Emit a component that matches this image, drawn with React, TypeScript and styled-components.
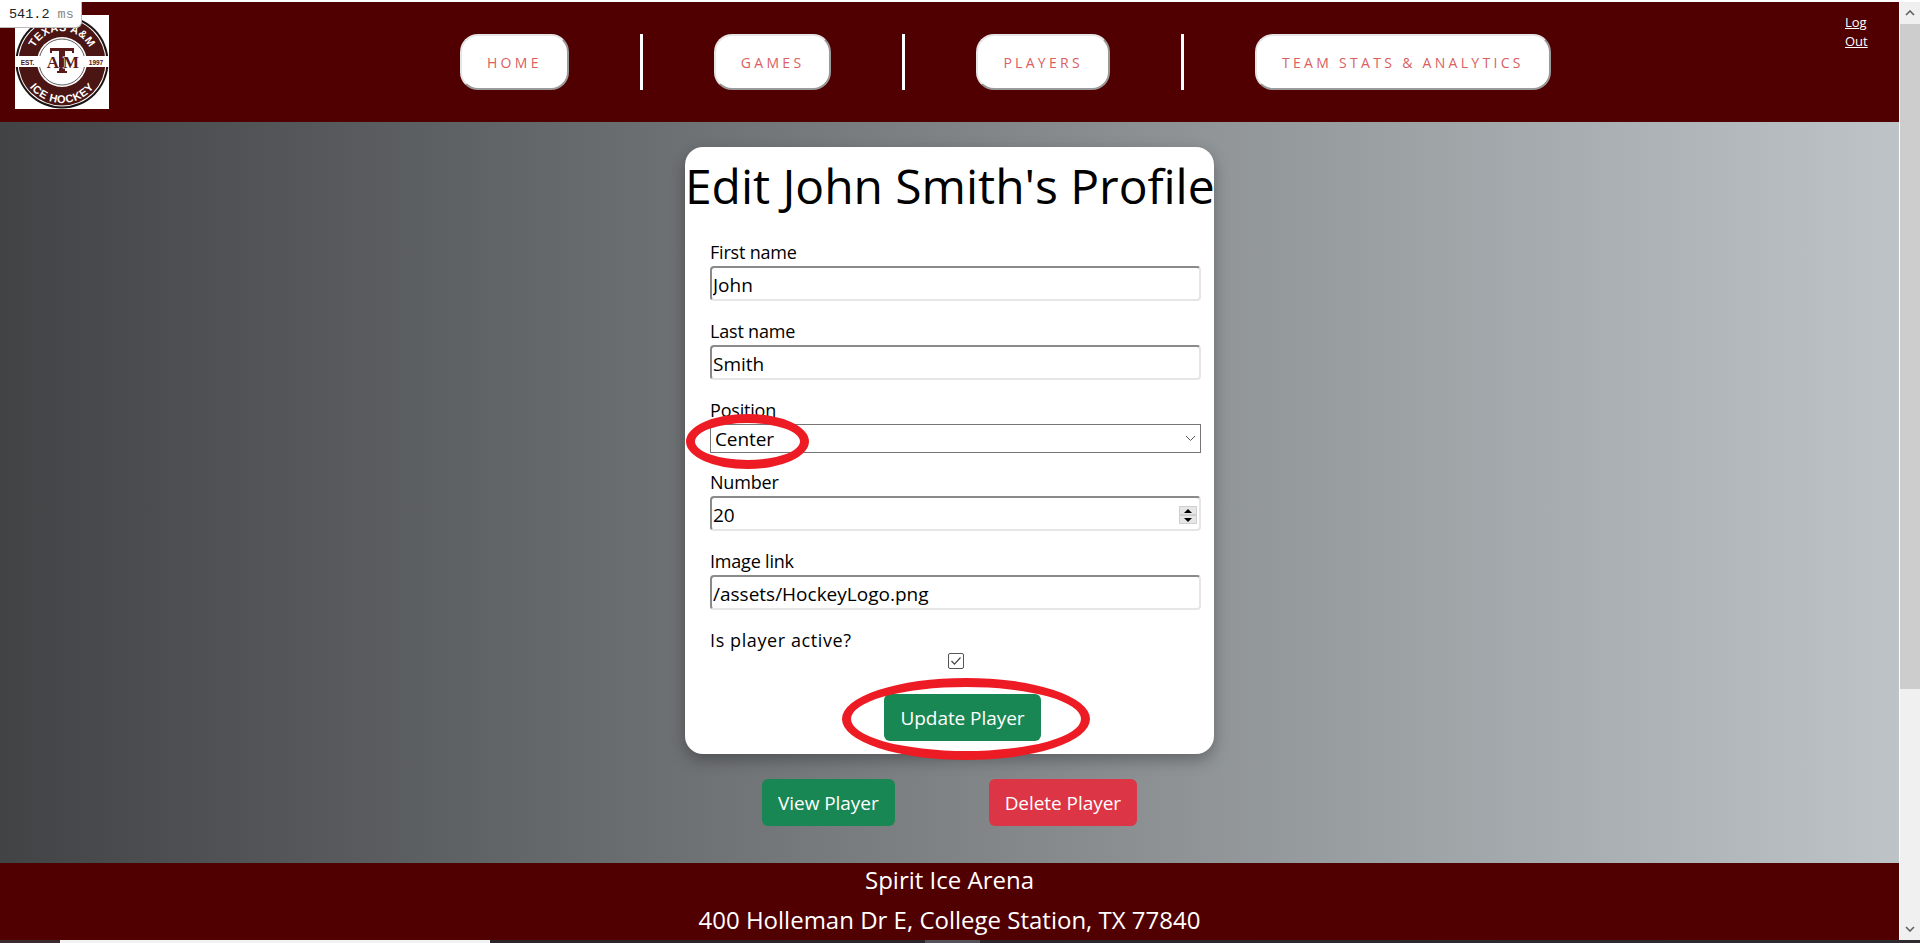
import React from "react";
import styled, { createGlobalStyle } from "styled-components";

const FONT = `"Open Sans", "Noto Sans", "Liberation Sans", sans-serif`;
const MAROON = "#500000";

const GlobalStyle = createGlobalStyle`
  html, body {
    margin: 0;
    height: 100%;
    overflow: hidden;
    background: #fff;
  }
  * {
    box-sizing: border-box;
  }
`;

const Frame = styled.div`
  width: 1920px;
  height: 943px;
  display: grid;
  grid-template-columns: 1899px 21px;
  grid-template-rows: 940px 3px;
  font-family: ${FONT};
  overflow: hidden;
  position: relative;
`;

const Page = styled.div`
  display: flex;
  flex-direction: column;
  padding-top: 2px;
  min-width: 0;
`;

const Timing = styled.div`
  position: absolute;
  left: 0;
  top: 2px;
  width: 82px;
  height: 26px;
  background: #fff;
  border-right: 1px solid #bbb;
  border-bottom: 1px solid #bbb;
  border-bottom-right-radius: 6px;
  padding-left: 9px;
  font: 13.5px/25px "Liberation Mono", monospace;
  color: #222;
  z-index: 5;
  span {
    color: #888;
  }
`;

const Header = styled.header`
  height: 120px;
  flex: none;
  background: ${MAROON};
  display: flex;
  align-items: flex-start;
`;

const Logo = styled.svg`
  width: 94px;
  height: 94px;
  margin: 13px 0 0 15px;
  flex: none;
`;

const Nav = styled.nav`
  display: flex;
  align-items: stretch;
  gap: 71px;
  height: 56px;
  margin: 32px 0 0 351px;
`;

const NavButton = styled.a`
  display: flex;
  align-items: center;
  padding: 0 25px;
  background: #fff;
  border: 2px solid;
  border-color: #e6e6e6 #9a9a9a #9a9a9a #e6e6e6;
  border-radius: 18px;
  color: #d9605f;
  font-size: 14px;
  font-weight: 400;
  letter-spacing: 3.3px;
  white-space: nowrap;
`;

const NavDivider = styled.div`
  width: 3px;
  background: #fff;
`;

const LogOut = styled.a`
  width: 24px;
  margin: 11px 30px 0 auto;
  color: #fff;
  font-size: 13px;
  line-height: 19px;
  text-decoration: underline;
`;

const Main = styled.main`
  flex: 1;
  background: linear-gradient(to right, #414345, #bdc3c7);
  display: flex;
  flex-direction: column;
  align-items: center;
  padding-top: 25px;
`;

const Card = styled.section`
  width: 529px;
  height: 607px;
  background: #fff;
  border-radius: 18px;
  box-shadow: 0 6px 16px rgba(0, 0, 0, 0.3);
  padding-top: 6px;
`;

const Title = styled.h1`
  margin: 0;
  font-size: 48px;
  font-weight: 400;
  line-height: 66px;
  letter-spacing: -0.05px;
  text-align: center;
  color: #000;
  white-space: nowrap;
`;

const Form = styled.form`
  margin: 20px 13px 0 25px;
  display: flex;
  flex-direction: column;
`;

const Field = styled.div<{ $height: number }>`
  height: ${(p) => p.$height}px;
  flex: none;
`;

const Label = styled.label<{ $tracking?: number }>`
  display: block;
  font-size: 18px;
  line-height: 27px;
  letter-spacing: ${(p) => p.$tracking ?? -0.2}px;
  color: #000;
`;

const TextInput = styled.input`
  display: block;
  width: 100%;
  height: 35px;
  padding: 3px 0 0 1px;
  border: 2px solid;
  border-color: #8a8a8a #e6e6e6 #e6e6e6 #8a8a8a;
  border-radius: 4px;
  outline: none;
  background: #fff;
  font-family: ${FONT};
  font-size: 19px;
  color: #000;
`;

const NumberWrap = styled.div`
  position: relative;
`;

const SpinBox = styled.div`
  position: absolute;
  right: 4px;
  top: 10px;
  width: 18px;
  height: 18px;
  display: flex;
  flex-direction: column;
  gap: 2px;
  background: #d0d0d0;
  padding: 1px;
`;

const SpinStep = styled.div<{ $down?: boolean }>`
  flex: 1;
  background: #e6e6e6;
  display: flex;
  align-items: center;
  justify-content: center;
  &::after {
    content: "";
    border-left: 4px solid transparent;
    border-right: 4px solid transparent;
    ${(p) =>
      p.$down ? "border-top: 4px solid #000;" : "border-bottom: 4px solid #000;"}
  }
`;

const SelectWrap = styled.div`
  position: relative;
`;

const Select = styled.select`
  display: block;
  width: 100%;
  height: 29px;
  padding: 0 0 0 4px;
  appearance: none;
  border: 1px solid #767676;
  border-radius: 0;
  background: #fff;
  font-family: ${FONT};
  font-size: 19px;
  letter-spacing: -0.1px;
  color: #000;
`;

const SelectArrow = styled.svg`
  position: absolute;
  right: 5px;
  top: 11px;
  width: 11px;
  height: 7px;
  pointer-events: none;
`;

const CheckRow = styled.div`
  display: flex;
  justify-content: center;
`;

const CheckBox = styled.span`
  width: 16px;
  height: 16px;
  border: 1px solid #555;
  border-radius: 2px;
  background: #fff;
  display: flex;
  align-items: center;
  justify-content: center;
`;

const SubmitRow = styled.div`
  display: flex;
  justify-content: center;
  margin: 25px 0 0 14px;
`;

const SubmitWrap = styled.div`
  position: relative;
`;

const Button = styled.button<{ $variant: "success" | "danger" }>`
  height: 47px;
  padding: 0 16px;
  border: none;
  border-radius: 6px;
  background: ${(p) => (p.$variant === "success" ? "#198754" : "#dc3545")};
  color: #fff;
  font-family: ${FONT};
  font-size: 19px;
  letter-spacing: -0.05px;
  white-space: nowrap;
`;

const Annotation = styled.div<{
  $left: number;
  $top: number;
  $width: number;
  $height: number;
}>`
  position: absolute;
  left: ${(p) => p.$left}px;
  top: ${(p) => p.$top}px;
  width: ${(p) => p.$width}px;
  height: ${(p) => p.$height}px;
  border: 9px solid #ed1c24;
  border-radius: 50%;
  pointer-events: none;
  z-index: 2;
`;

const Actions = styled.div`
  display: flex;
  gap: 94px;
  margin-top: 25px;
`;

const Footer = styled.footer`
  height: 77px;
  flex: none;
  background: ${MAROON};
  color: #fff;
  text-align: center;
  font-size: 24px;
  line-height: 34px;
  display: flex;
  flex-direction: column;
  gap: 6px;
  p {
    margin: 0;
  }
`;

const ScrollBar = styled.div`
  margin-top: 2px;
  border-left: 1px solid #fff;
  background: #f0f0f0;
  display: flex;
  flex-direction: column;
  align-items: center;
`;

const ScrollArrow = styled.svg`
  flex: none;
  width: 10px;
  height: 6px;
  margin: 8px 0;
`;

const ScrollThumb = styled.div`
  width: 100%;
  height: 665px;
  flex: none;
  background: #cdcdcd;
`;

const ScrollSpacer = styled.div`
  flex: 1;
`;

const TaskStrip = styled.div`
  grid-column: 1 / -1;
  background: linear-gradient(to right, #2b2328, #2d2a30);
  display: flex;
`;

const StripSegment = styled.div<{ $width: number; $color?: string }>`
  width: ${(p) => p.$width}px;
  flex: none;
  background: ${(p) => p.$color ?? "transparent"};
`;

const TeamLogo = () => (
  <Logo viewBox="0 0 94 94" aria-label="Texas A&M Ice Hockey">
    <defs>
      <path id="arcTop" d="M 16 47 A 31 31 0 0 1 78 47" />
      <path id="arcBottom" d="M 6 47 A 41 41 0 0 0 88 47" />
    </defs>
    <rect width="94" height="94" fill="#fff" />
    <circle cx="47" cy="47" r="46.5" fill="#1c1414" />
    <circle cx="47" cy="47" r="44.5" fill="#fff" />
    <circle cx="47" cy="47" r="43.5" fill="#4a1512" />
    <circle cx="47" cy="47" r="25" fill="#fff" />
    <circle cx="47" cy="47" r="23" fill="none" stroke="#333" strokeWidth="0.8" />
    <rect x="0" y="41" width="94" height="11" fill="#fff" />
    <text fontFamily="Liberation Sans" fontSize="11" fontWeight="700" fill="#fff" textAnchor="middle" letterSpacing="0.4">
      <textPath href="#arcTop" startOffset="50%">TEXAS A&amp;M</textPath>
    </text>
    <text fontFamily="Liberation Sans" fontSize="11" fontWeight="700" fill="#fff" textAnchor="middle" letterSpacing="0.6">
      <textPath href="#arcBottom" startOffset="50%">ICE HOCKEY</textPath>
    </text>
    <text x="12.5" y="49.5" fontFamily="Liberation Sans" fontSize="6.5" fontWeight="700" fill="#4a1512" textAnchor="middle">EST.</text>
    <text x="81" y="49.5" fontFamily="Liberation Sans" fontSize="6.5" fontWeight="700" fill="#4a1512" textAnchor="middle">1997</text>
    <path d="M35 33h24v5h-2v-2h-7v20h2v2h-10v-2h2v-20h-7v2h-2z" fill="#5a1a1a" />
    <text x="38" y="53" fontFamily="Liberation Serif" fontSize="17" fontWeight="700" fill="#5a1a1a" stroke="#fff" strokeWidth="1" paintOrder="stroke" textAnchor="middle">A</text>
    <text x="56" y="53" fontFamily="Liberation Serif" fontSize="17" fontWeight="700" fill="#5a1a1a" stroke="#fff" strokeWidth="1" paintOrder="stroke" textAnchor="middle">M</text>
  </Logo>
);

const navItems = ["HOME", "GAMES", "PLAYERS", "TEAM STATS & ANALYTICS"];

export default function App() {
  return (
    <Frame>
      <GlobalStyle />
      <Timing>
        541.2 <span>ms</span>
      </Timing>
      <Page>
        <Header>
          <TeamLogo />
          <Nav>
            {navItems.map((item, i) => (
              <React.Fragment key={item}>
                {i > 0 && <NavDivider />}
                <NavButton>{item}</NavButton>
              </React.Fragment>
            ))}
          </Nav>
          <LogOut>Log Out</LogOut>
        </Header>
        <Main>
          <Card>
            <Title>Edit John Smith's Profile</Title>
            <Form>
              <Field $height={79}>
                <Label>First name</Label>
                <TextInput readOnly value="John" />
              </Field>
              <Field $height={79}>
                <Label>Last name</Label>
                <TextInput readOnly value="Smith" />
              </Field>
              <Field $height={72}>
                <Label>Position</Label>
                <SelectWrap>
                  <Select defaultValue="Center">
                    <option>Center</option>
                    <option>Wing</option>
                    <option>Defense</option>
                    <option>Goalie</option>
                  </Select>
                  <SelectArrow viewBox="0 0 11 7">
                    <path d="M1 1l4.5 4.5L10 1" fill="none" stroke="#555" strokeWidth="1" />
                  </SelectArrow>
                  <Annotation $left={-24} $top={-10} $width={123} $height={55} />
                </SelectWrap>
              </Field>
              <Field $height={79}>
                <Label>Number</Label>
                <NumberWrap>
                  <TextInput readOnly value="20" />
                  <SpinBox>
                    <SpinStep />
                    <SpinStep $down />
                  </SpinBox>
                </NumberWrap>
              </Field>
              <Field $height={79}>
                <Label>Image link</Label>
                <TextInput readOnly value="/assets/HockeyLogo.png" />
              </Field>
              <Field $height={26}>
                <Label $tracking={0.6}>Is player active?</Label>
              </Field>
              <CheckRow>
                <CheckBox>
                  <svg width="12" height="10" viewBox="0 0 12 10">
                    <path d="M1.5 5l3 3.2L10.5 1.5" fill="none" stroke="#444" strokeWidth="1.2" />
                  </svg>
                </CheckBox>
              </CheckRow>
              <SubmitRow>
                <SubmitWrap>
                  <Button type="button" $variant="success">Update Player</Button>
                  <Annotation $left={-42} $top={-16} $width={248} $height={82} />
                </SubmitWrap>
              </SubmitRow>
            </Form>
          </Card>
          <Actions>
            <Button type="button" $variant="success">View Player</Button>
            <Button type="button" $variant="danger">Delete Player</Button>
          </Actions>
        </Main>
        <Footer>
          <p>Spirit Ice Arena</p>
          <p>400 Holleman Dr E, College Station, TX 77840</p>
        </Footer>
      </Page>
      <ScrollBar>
        <ScrollArrow viewBox="0 0 10 6">
          <path d="M1 5l4-4 4 4" fill="none" stroke="#606060" strokeWidth="1.6" />
        </ScrollArrow>
        <ScrollThumb />
        <ScrollSpacer />
        <ScrollArrow viewBox="0 0 10 6">
          <path d="M1 1l4 4 4-4" fill="none" stroke="#606060" strokeWidth="1.6" />
        </ScrollArrow>
      </ScrollBar>
      <TaskStrip>
        <StripSegment $width={60} $color="#3a2a2e" />
        <StripSegment $width={430} $color="#f2f2f2" />
        <StripSegment $width={435} />
        <StripSegment $width={55} $color="#55505a" />
      </TaskStrip>
    </Frame>
  );
}
